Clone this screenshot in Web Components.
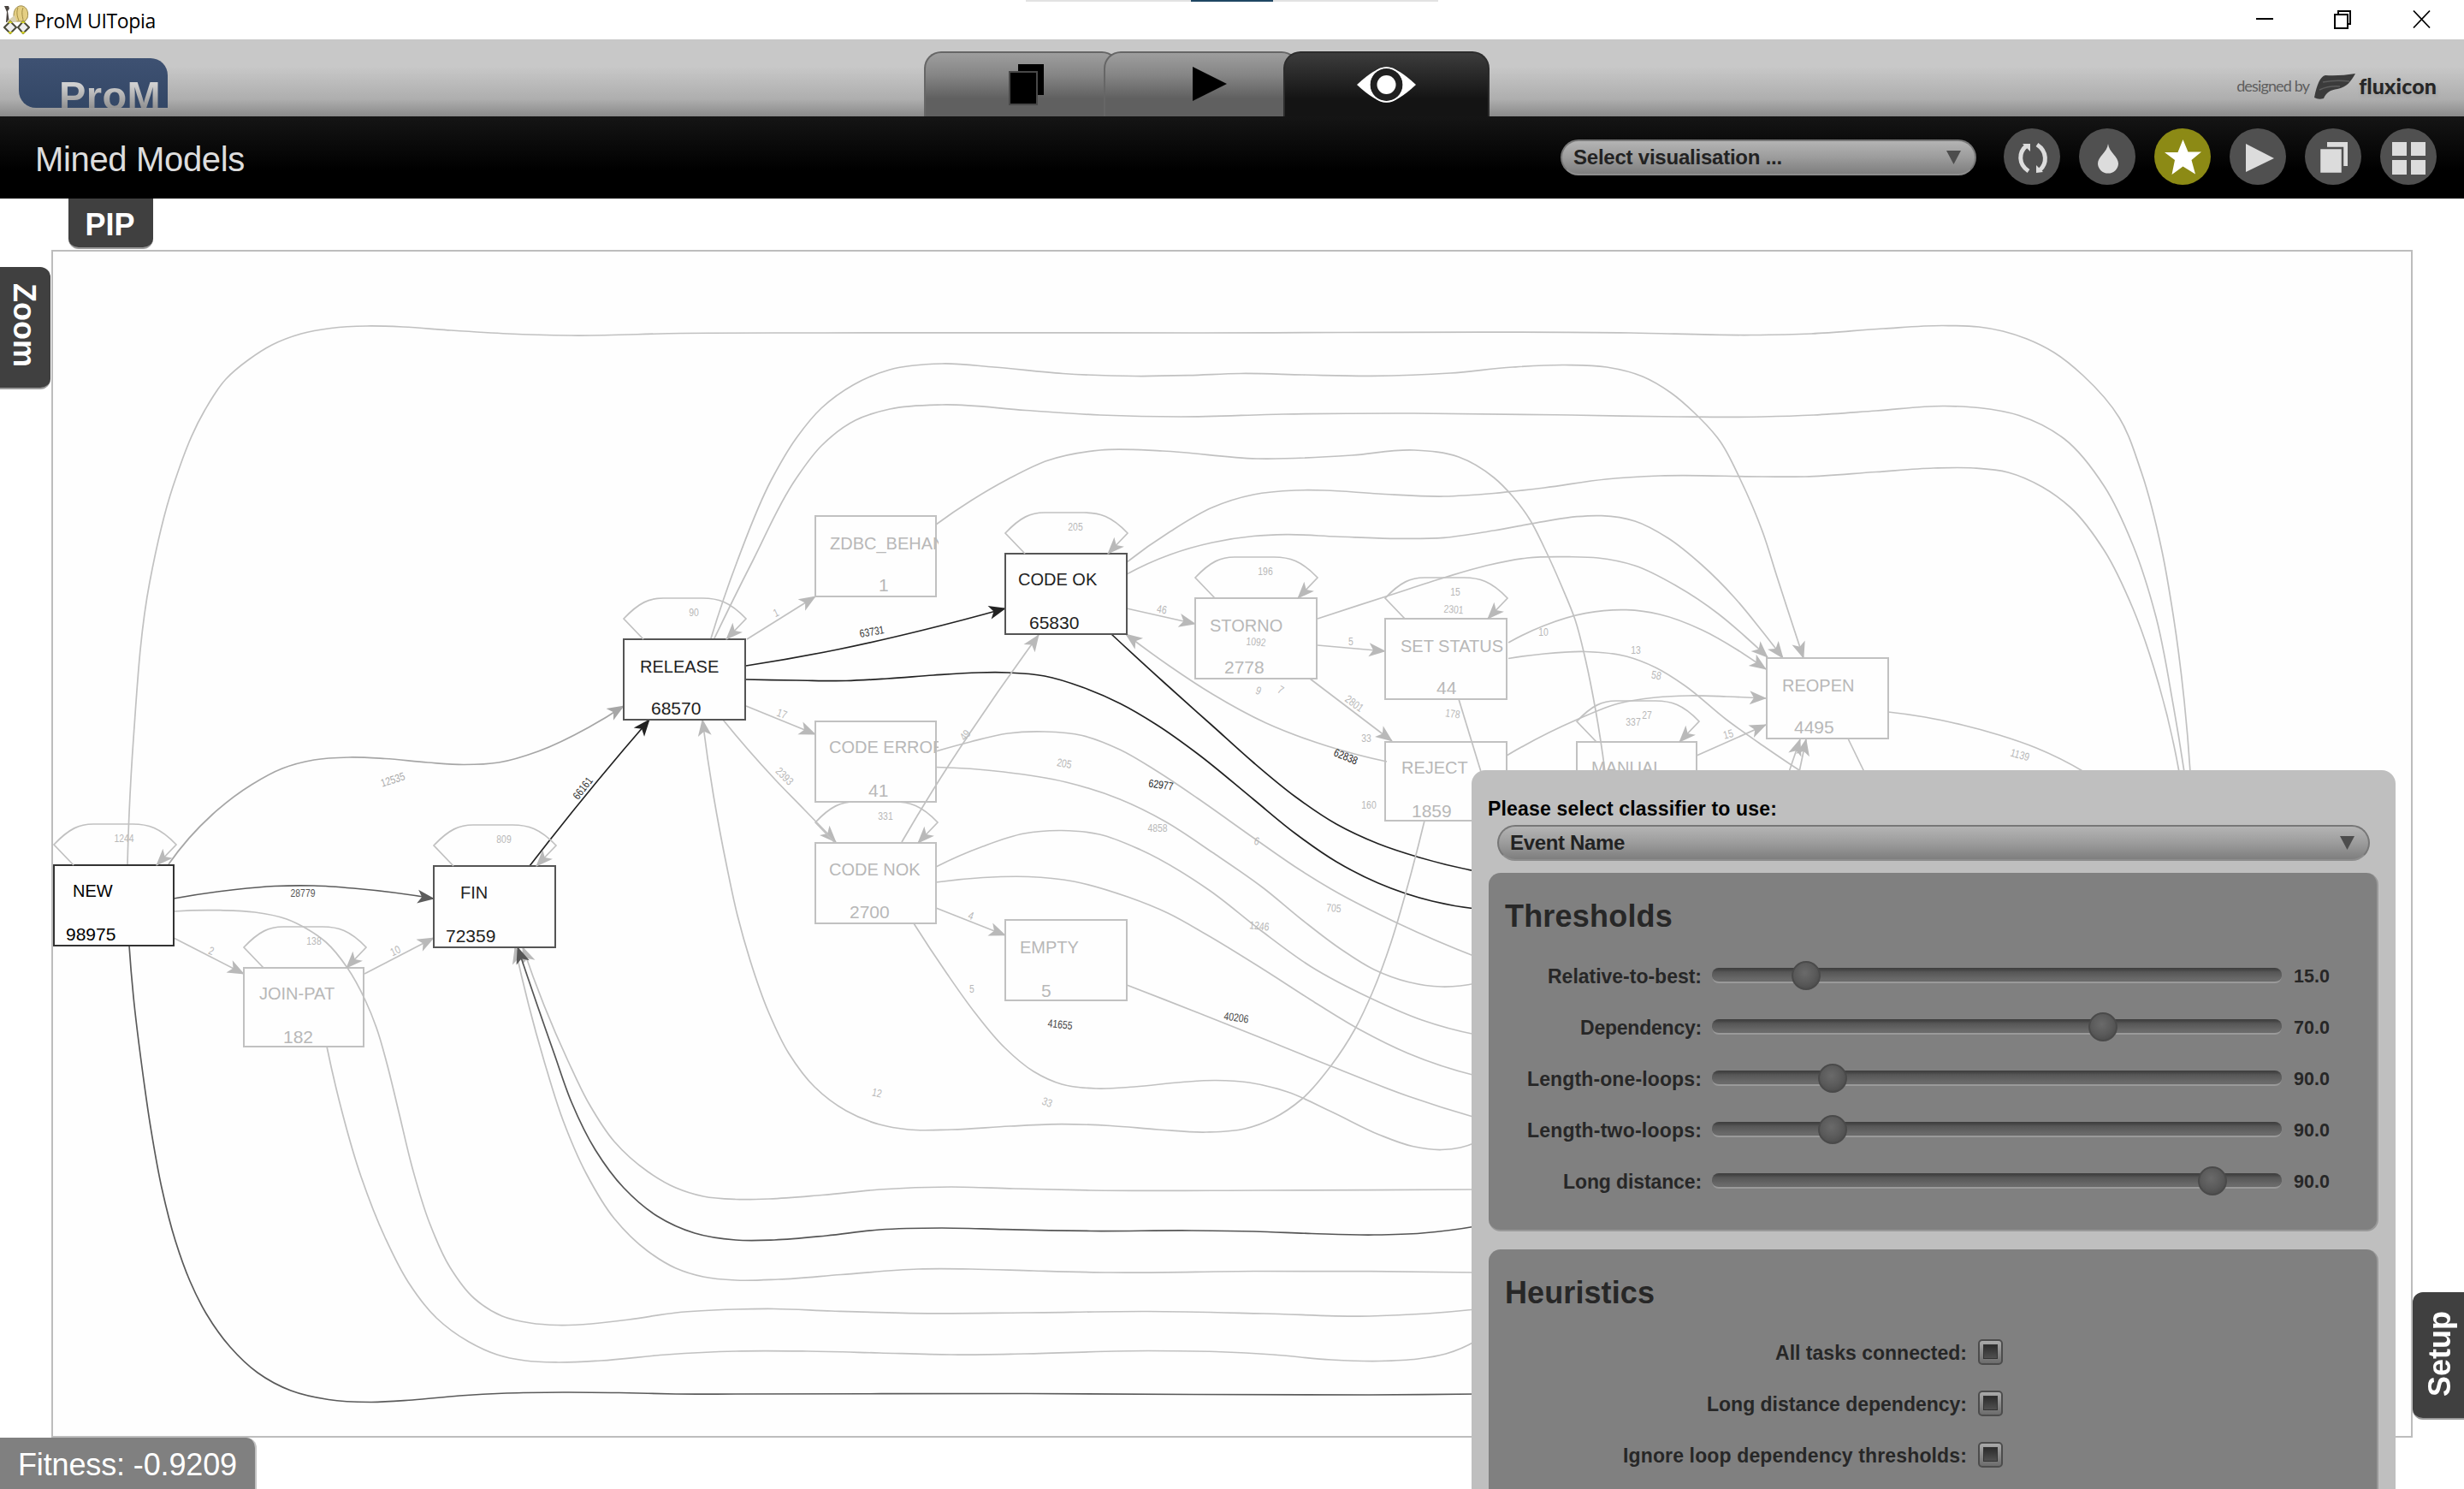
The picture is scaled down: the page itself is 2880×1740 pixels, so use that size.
<!DOCTYPE html>
<html lang="en">
<head>
<meta charset="utf-8">
<title>ProM UITopia</title>
<style>
html,body{margin:0;height:100%;overflow:hidden;background:#fff}
body{font-family:"Liberation Sans",Arial,sans-serif}
</style>
</head>
<body>
<prom-window></prom-window>
<script>
const define = (name, html, setup) => {
  const tpl = document.createElement('template');
  tpl.innerHTML = html;
  customElements.define(name, class extends HTMLElement {
    connectedCallback() {
      if (this.shadowRoot) return;
      this.attachShadow({mode: 'open'}).append(tpl.content.cloneNode(true));
      customElements.upgrade(this.shadowRoot);
      if (setup) setup(this, this.shadowRoot);
    }
  });
};

/* A single-line label whose tracking is adjusted to a given width. */
define('fit-label', `<style>:host{display:inline-block;white-space:nowrap}</style><slot></slot>`, host => {
  const w = +host.getAttribute('w');
  if (!w) return;
  const range = document.createRange();
  range.selectNodeContents(host);
  const natural = range.getBoundingClientRect().width;
  if (natural) host.style.letterSpacing = ((w - natural) / host.textContent.length) + 'px';
});

define('title-bar', `<style>
:host{display:flex;height:46px;background:#fff;align-items:center;position:relative;font-family:"Open Sans","Noto Sans",sans-serif;font-size:23px;line-height:46px;color:#000}
.app{margin:0 5px 0 4px}
fit-label{padding-top:2px;flex:1}
.grip{position:absolute;left:1199px;top:0;width:482px;height:2px;background:#e2e2e2;display:flex;justify-content:center}
.grip i{width:96px;background:#1f4763}
.ctl{margin-right:36px}
</style>
<svg class="app" width="31" height="34" viewBox="0 0 31 34"><path d="M1 1h5l1 3-2 3 2 13H3L4 8z" fill="#4a4440"/><path d="M12 12C12 3 18 0 22 1c5 1 8 7 6 14l-3 4H13z" fill="#e5cf83" stroke="#9b8a4c"/><path d="M17 3c-2 5-1 10 1 15M23 3c-2 5-1 9 0 14" stroke="#a18c45" fill="none"/><path d="M5 18l8-6 3 8H4z" fill="#d8d0b2"/><path d="M1 26l7-7 7 7-7 7zM17 26l6-7 7 7-7 7z" fill="#eee" stroke="#4a4a3a" stroke-width="2"/><path d="M5 31h6l-3 3zM20 31h6l-3 3zM5 21l3-3 3 3zM20 21l3-3 3 3z" fill="#d2cf22"/></svg>
<fit-label w="142">ProM UITopia</fit-label>
<div class="grip"><i></i></div>
<svg class="ctl" width="210" height="24" viewBox="0 0 210 24" fill="none" stroke="#000" stroke-width="2"><path d="M3 11h20"/><path d="M95 6h15v16H95zM99 6V2h14v15h-3"/><path d="M187 1.500l19 20M206 1.500l-19 20" stroke-width="1.800"/></svg>`);

define('workspace-tab', `<style>
:host{display:block;box-sizing:border-box;width:228px;height:76px;margin-right:-18px;border:2px solid #666;border-bottom:0;border-radius:20px 20px 0 0;background:linear-gradient(#9e9e9e,#858585 35%,#606060 72%)}
:host([active]){width:241px;margin:0;border-color:#2c2c2c;background:linear-gradient(#3c3c3c,#262626 40%,#141414 72%)}
</style><slot></slot>`);

define('app-header', `<style>
:host{display:grid;grid-template-columns:1080px 661px 1fr;height:90px;align-items:end;background:linear-gradient(#c8c8c8,#c8c8c8 35%,#aeaeae 78%,#8a8a8a)}
.logo{align-self:start;margin:22px 0 0 22px;box-sizing:border-box;width:174px;height:58px;padding-left:47px;overflow:hidden;border-radius:0 20px 0 20px;background:linear-gradient(#3e5172,#334766);font-weight:bold;font-size:47px;line-height:88px}
.logo fit-label{color:transparent;background:linear-gradient(#d0d0d0 35%,#8d8d8d 68%);-webkit-background-clip:text;background-clip:text}
.tabs{display:flex}
svg{display:block}
.by{display:flex;justify-content:flex-end;align-self:start;padding:34px 32px 0 0;font-family:Lato,sans-serif;line-height:40px}
.d{font-size:18px;font-weight:400;color:#5e5e5e}
.f{font-size:25px;font-weight:900;color:#262626;text-shadow:1px 3px 4px #8886}
.by svg{margin:5px 3px 0 6px}
</style>
<div class="logo"><fit-label w="119">ProM</fit-label></div>
<div class="tabs">
<workspace-tab><svg width="224" height="74"><path d="M108 13h30v36h-30z" fill="#000"/><path d="M98 22h32v38H98z" fill="#000" stroke="#484848" stroke-width="2"/></svg></workspace-tab>
<workspace-tab><svg width="224" height="74"><path d="M102 16l40 20-40 20z" fill="#000"/></svg></workspace-tab>
<workspace-tab active><svg width="237" height="74"><path d="M84 37Q106 16.500 118.500 16.500T153 37Q131 57.500 118.500 57.500T84 37z" fill="#fff"/><circle cx="118.500" cy="37" r="19" fill="#202020"/><circle cx="118.500" cy="37" r="11" fill="#fff"/><circle cx="118.500" cy="37" r="20" fill="none" stroke="#fff" stroke-width="1.500"/></svg></workspace-tab>
</div>
<div class="by"><fit-label class="d" w="85">designed by</fit-label><svg width="49" height="32" viewBox="0 0 49 32"><path d="M0 29C3 14 7 4 13 3Q30 4 48 1C43 10 38 17 27 19C19 20 14 23 11 30Q5 32 0 29z" fill="#3b3b3b"/><path d="M10 11Q25 8 41 10M6 20Q17 15 30 16" stroke="#5c5c5c" stroke-width="1.500" fill="none"/></svg><fit-label class="f" w="91">fluxicon</fit-label></div>`);

define('combo-box', `<style>
:host{display:flex;box-sizing:border-box;height:42px;border:2px solid #777;border-bottom-color:#8d8d8d;border-radius:21px;align-items:center;padding:0 16px 0 13px;justify-content:space-between;background:linear-gradient(#b4b4b4,#9c9c9c 50%,#7e7e7e);font-weight:bold;font-size:24px;line-height:38px;color:#222}
</style><slot></slot><svg width="17" height="17"><path d="M0 0h17L8.500 16z" fill="#4d4d4d"/></svg>`);

define('round-button', `<style>
:host{display:block;width:66px;height:66px;border-radius:50%;background:#505050;color:#dcdcdc}
:host([active]){background:#8c8a15;color:#fff}
</style><slot></slot>`);

define('view-bar', `<style>
:host{display:flex;height:96px;align-items:center;background:linear-gradient(#151515,#000 66%);box-sizing:border-box;padding:0 32px 0 41px;color:#ddd}
h1{margin:4px 0 0;flex:1;font-weight:normal;font-size:40px;line-height:96px}
combo-box{width:486px;margin-right:32px}
.buttons{display:flex;gap:22px;margin-top:-2px}
svg{display:block}
</style>
<h1><fit-label w="245">Mined Models</fit-label></h1>
<combo-box><fit-label w="244">Select visualisation ...</fit-label></combo-box>
<div class="buttons">
<round-button><svg width="66" height="66" fill="none" stroke="currentColor" stroke-width="5"><path d="M29 50C17 42 17 28 27 20"/><path d="M39 19C51 27 51 41 42 49"/><path d="M22 18h9v9z M38 52v-9l8 8z" fill="currentColor" stroke="none"/></svg></round-button>
<round-button><svg width="66" height="66"><path d="M34 18C35 28 46 33 46 41A12 11.500 0 0 1 22 41C22 33 33 28 34 18z" fill="currentColor"/></svg></round-button>
<round-button active><svg width="66" height="66"><path d="M33.500 13l6 14.500H55L43.500 37l4.500 16.500-14.500-9-13 9.500 3.500-17-12-9h15.500z" fill="currentColor"/></svg></round-button>
<round-button><svg width="66" height="66"><path d="M19 18l33 17-33 16z" fill="currentColor"/></svg></round-button>
<round-button><svg width="66" height="66"><path d="M26 16h24v28H26z" fill="currentColor"/><path d="M17 23h27v30H17z" fill="currentColor" stroke="#505050" stroke-width="2.500"/></svg></round-button>
<round-button><svg width="66" height="66"><path d="M14 16h17v16H14zM36 16h17v16H36zM14 37h17v17H14zM36 37h17v17H36z" fill="currentColor"/></svg></round-button>
</div>`);

/* Heuristics net: boxes, smoothed edges, arrowheads and frequencies. */
const LIGHT = '#c1c1c1', DARK = '#222';
const nodes = [
  [63,1011,203,1105,'NEW',85,1048,'98975',77,1099,'#333','#000','1244'],
  [507,1012,649,1107,'FIN',538,1050,'72359',521,1101,'#555','#222','809'],
  [285,1131,425,1223,'JOIN-PAT',303,1168,'182',331,1219,LIGHT,'#b8b8b8','138'],
  [729,747,871,841,'RELEASE',748,786,'68570',761,835,'#555','#222','90'],
  [953,603,1094,697,'ZDBC_BEHAN',970,642,'1',1027,691,LIGHT,'#b8b8b8'],
  [1175,647,1317,741,'CODE OK',1190,684,'65830',1203,735,'#555','#222','205'],
  [953,843,1094,937,'CODE ERROR',969,880,'41',1015,931,LIGHT,'#b8b8b8'],
  [953,985,1094,1079,'CODE NOK',969,1023,'2700',993,1073,LIGHT,'#b8b8b8','331'],
  [1175,1075,1317,1169,'EMPTY',1192,1114,'5',1217,1165,LIGHT,'#b8b8b8'],
  [1397,699,1539,793,'STORNO',1414,738,'2778',1431,787,LIGHT,'#b8b8b8','196'],
  [1619,723,1761,817,'SET STATUS',1637,762,'44',1679,811,LIGHT,'#b8b8b8','15'],
  [1619,867,1761,959,'REJECT',1638,904,'1859',1650,955,LIGHT,'#b8b8b8'],
  [1843,867,1983,959,'MANUAL',1860,904,'',0,0,LIGHT,'#b8b8b8','27'],
  [2065,769,2207,863,'REOPEN',2083,808,'4495',2097,857,LIGHT,'#b8b8b8']
];
/* [colour, flat list of x,y points, arrow at the end] */
const edges = [
  [LIGHT,[149,1010,151,950,156,863,175,680,202,569,239,480,264,443,291,420,318,403,352,390,387,383.500,429,381,471,382,527,386,594,390,667,392,796,389.500,960,389,1400,389,1906,389,2047,391.500,2117,390,2201,384,2271,380.500,2313,382,2341,387,2369,396,2401,412,2435,439,2477,488,2503,552,2527,644,2540,718,2553,819,2560,902]],
  [LIGHT,[831,746,862,655,902,560,930,513,960,477,997,450,1040,432,1101,425,1162,429,1242,436.500,1327,439.500,1389,438.700,1450,436.500,1523,438,1603,439.300,1695,436,1768,429,1829,426.500,1878,429,1920,440,1953,459,1980,482,2010,515,2034,560,2060,621,2077,674,2108,769],1],
  [LIGHT,[835,746,880,655,930,560,960,521,1000,491,1040,478,1101,473,1199,479.500,1286,485,1380,487,1500,484,1653,483,1836,485,1960,487,2060,487,2120,485,2193,480,2273,474.500,2313,476.500,2360,485.500,2413,513,2460,569,2493,637,2520,721,2540,823,2553,902]],
  [LIGHT,[1094,613,1135,585,1178,560,1225,538,1286,526,1359,527,1469,536,1580,532,1653,526,1705,534,1746,558,1768,580,1788,607,1805,640,1824,682,1841,724,1853,770,1865,830,1876,902]],
  [LIGHT,[1317,657,1368,621,1417,593,1465,578,1514,573,1548,573,1611,577,1688,580,1746,576.500,1805,570,1877,560,1940,556,2060,557,2110,557,2193,551.500,2260,547,2307,547,2347,552,2387,569,2420,593,2460,644,2493,711,2523,799,2547,902]],
  [LIGHT,[1317,671,1368,648,1417,634,1465,626.500,1504,624.700,1562,627,1630,629.300,1688,628.300,1746,620,1805,609.300,1843,603.700,1872,602.700,1911,609,1950,629,1989,660,2027,698,2060,738,2084,769],1],
  [LIGHT,[1540,723,1620,697,1688,675,1737,661,1785,652,1834,650.700,1868,652,1911,661,1960,685,2008,717,2040,744,2066,768],1],
  [LIGHT,[1763,751,1805,731,1853,716.700,1901,712.700,1940,718,1989,736,2030,759,2064,782],1],
  [LIGHT,[1763,769.500,1805,764,1853,761.500,1901,767,1935,780,1969,801,2018,841,2060,871,2106,902]],
  [LIGHT,[1761,883,1843,841,1892,822,1935,815,1974,813,2018,814,2064,816],1],
  [LIGHT,[1983,883,2064,847],1],
  [LIGHT,[1540,754,1619,761],1],
  [LIGHT,[1317,711,1397,729],1],
  [LIGHT,[1531,793,1627,866],1],
  [LIGHT,[1621,890,1552,872,1480,845,1417,811,1368,779,1316,741],1],
  [DARK,[1299,741,1360,797,1417,848,1465,891,1514,931,1562,963,1611,986,1659,1002,1725,1018]],
  [DARK,[872,794,931,795,989,795.500,1037,793,1091,789,1144,786,1178,786,1221,790,1265,803,1309,822,1352,847,1400,881,1465,934,1514,974,1562,1007,1611,1032,1674,1053,1725,1062]],
  ['#222',[872,778,979,759,1076,737,1175,711],1],
  [LIGHT,[873,747,953,697],1],
  [LIGHT,[872,825,953,858],1],
  [LIGHT,[845,841,906,911,940,946,977,984],1],
  [LIGHT,[1054,984,1090,924,1134,856,1214,742],1],
  [LIGHT,[1094,1061,1175,1093],1],
  [LIGHT,[1094,878,1134,867,1178,857,1221,855,1265,859.500,1309,876,1352,901,1400,933,1465,979,1514,1013,1556,1039,1634,1079,1725,1118]],
  [LIGHT,[1094,896.500,1173,902,1246,914,1309,934,1362,960,1417,996,1477,1038,1522,1075,1567,1109,1606,1133,1646,1147.500,1685,1153,1725,1149]],
  [LIGHT,[1094,1013,1149,989,1197,974,1241,970.500,1285,975,1333,993,1413,1040,1472,1086,1533,1130,1601,1166,1662,1192,1725,1209]],
  [LIGHT,[1094,1031,1149,1025.500,1202,1024.500,1255,1030,1318,1048,1365,1067,1410,1092,1477,1133,1533,1169,1589,1203,1646,1231,1725,1257]],
  [LIGHT,[1317,1151,1399,1183,1477,1214,1556,1246,1646,1281,1725,1306]],
  [LIGHT,[1068,1079,1107,1138,1140,1184,1174,1224,1208,1252,1241,1267,1281,1272,1326,1270,1382,1264.500,1421,1262.500,1460,1265,1505,1276,1556,1299,1612,1326,1651,1339.500,1685,1343.500,1707,1341,1725,1335]],
  [LIGHT,[1665,959,1644,1040,1626,1101,1604,1160,1584,1202,1556,1245,1522,1284,1488,1307,1455,1319,1410,1323,1354,1320,1298,1315.500,1241,1313.600,1180,1316,1112,1320,1062,1320,1028,1314,989,1298,952,1270,922,1231,898,1182,877,1123,862,1070,850,1015,834,930,821,841],1],
  [LIGHT,[1705,817,1731,902]],
  ['#a6a6a6',[197,1010,248,952,294,917,330,898,367,888,408,885,450,886.500,500,891,542,893.500,583,891,629,878,688,850,729,825],1],
  ['#222',[619,1012,640,985,759,841],1],
  ['#5c5c5c',[203,1050,275,1039.500,321,1035.500,367,1035,413,1038,507,1050],1],
  [LIGHT,[203,1096,285,1138],1],
  [LIGHT,[426,1138,507,1096],1],
  [LIGHT,[203,1065,257,1063.700,298,1066,335,1074,358,1085,381,1101,406,1131,427,1169,440,1201,452,1242,466,1299,482,1365,502,1429,526,1481,554,1517,587,1538,620,1546,652,1548.500,691,1547,735,1542,790,1534,860,1530,905,1529.500,972,1532,1084,1534.800,1197,1534,1342,1532.500,1477,1535,1601,1538,1668,1535,1725,1530]],
  [LIGHT,[382,1223,400,1300,422,1375,450,1446,477,1498,510,1540,548,1568,581,1583,614,1590,652,1592,702,1590,779,1583,860,1579,944,1579,1028,1581,1112,1583,1197,1582,1342,1578.500,1421,1579.500,1488,1583,1556,1589,1612,1590.500,1657,1588,1690,1582,1725,1567]],
  ['#5a5a5a',[151,1105,156,1165,165,1240,176,1317,189,1388,205,1450,222,1497,241,1535,269,1574,301,1604,340,1625,384,1635.500,433,1638.500,482,1636,537,1631,592,1628,658,1627,724,1627.500,790,1629,860,1629,1200,1628.500,1600,1630,1725,1629]],
  [LIGHT,[1725,1390,1477,1391,1275,1391,1185,1389,1112,1387,1028,1390,961,1396.500,899,1401,860,1401.500,822,1398,790,1388,757,1369,718,1334,688,1289,664,1240,611,1107],1],
  [LIGHT,[1725,1487,1466,1485.500,1298,1487,1208,1485,1135,1483,1073,1483,983,1489.500,910,1495,860,1496,822,1492,790,1482,757,1462,718,1424,685,1371,658,1309,636,1240,602,1107],1],
  ['#555',[1725,1433,1662,1441,1606,1443,1533,1441.500,1466,1439,1393,1438,1275,1438.500,1174,1436.700,1101,1435,1028,1437,966,1444,905,1449,860,1449,812,1441,768,1421,729,1388,696,1344,668,1288,648,1232,605,1107],1],
  [LIGHT,[2207,832,2250,838,2293,847,2337,859,2380,874,2436,902]],
  [LIGHT,[2160,863,2179,902]],
  [LIGHT,[2091,902,2104,864],1],
  [LIGHT,[2103,902,2111,864],1]
];
/* [text, centre x, centre y, angle, colour] */
const weights = [
  ['12535',459,911,-18,'#aaa'],['66161',681,921,-52,'#333'],['28779',354,1043,0,'#555'],['2',247,1111,20],['10',462,1111,-25],
  ['1',907,716,-25],['63731',1019,738,-10,'#333'],['17',914,834,20],['2393',917,907,45],['49',1128,859,-50],['205',1244,892,10],
  ['62977',1357,917,8,'#222'],['4858',1353,967,0],['4',1135,1070,20],['46',1358,712,10],['5',1579,749,0],['1092',1468,750,4],
  ['9',1471,807,20],['7',1497,806,30],['2801',1583,822,36],['33',1597,862,0],['178',1698,834,8],['62838',1573,884,22,'#222'],
  ['160',1600,940,0],['2301',1699,712,4],['10',1804,738,0],['13',1912,759,0],['58',1936,789,10],['337',1909,843,0],['15',2020,858,-15],
  ['6',1469,983,15],['705',1559,1061,4],['1246',1472,1082,6],['40206',1445,1189,8,'#444'],['41655',1239,1197,6,'#444'],['5',1136,1155,0],
  ['12',1025,1277,12],['33',1224,1288,20],['1139',2361,882,16]
];
/* Smooth curve through the points; tangents follow the local parabola so uneven spacing stays even. */
function spline(p) {
  const n = p.length / 2, P = i => [p[2*i], p[2*i+1]];
  const len = [], dir = [];
  for (let i = 0; i < n - 1; i++) {
    const a = P(i), b = P(i+1), l = Math.hypot(b[0]-a[0], b[1]-a[1]);
    len.push(l); dir.push([(b[0]-a[0])/l, (b[1]-a[1])/l]);
  }
  const tan = [];
  for (let i = 1; i < n - 1; i++) {
    const d1 = len[i-1], d2 = len[i];
    tan[i] = [0, 1].map(k => (dir[i-1][k]*d2 + dir[i][k]*d1) / (d1 + d2));
  }
  tan[0] = n > 2 ? [0, 1].map(k => 2*dir[0][k] - tan[1][k]) : dir[0];
  tan[n-1] = n > 2 ? [0, 1].map(k => 2*dir[n-2][k] - tan[n-2][k]) : dir[0];
  let d = `M${p[0]} ${p[1]}`;
  for (let i = 0; i < n - 1; i++) {
    const a = P(i), b = P(i+1), l = len[i] / 3, s = tan[i], e = tan[i+1];
    d += `C${[a[0]+s[0]*l, a[1]+s[1]*l, b[0]-e[0]*l, b[1]-e[1]*l].map(v => v.toFixed(1)).join(' ')} ${b[0]} ${b[1]}`;
  }
  return d;
}
function head(x0, y0, x, y, col) {
  const a = Math.atan2(y - y0, x - x0) * 180 / Math.PI;
  return `<path transform="translate(${x} ${y}) rotate(${a.toFixed(1)})" d="M1 0L-19-8-14 0-19 8z" fill="${col}"/>`;
}
define('process-graph', `<style>
:host{display:block;width:2880px;height:1508px}
svg{display:block}
text{font-family:"Liberation Sans",sans-serif;font-size:20px}
.n{font-size:21px}
.w{font-size:13px;text-anchor:middle}
</style><svg width="2880" height="1508" viewBox="0 232 2880 1508"></svg>`, (host, root) => {
  let s = `<rect x="61" y="293" width="2758" height="1386" fill="#fefefe" stroke="#bdbdbd" stroke-width="2"/>`;
  for (const [col, p, arrow] of edges) {
    const n = p.length;
    s += `<path d="${spline(p)}" fill="none" stroke="${col}" stroke-width="1.700"/>`;
    if (arrow) s += head(p[n-4], p[n-3], p[n-2], p[n-1], col === LIGHT ? '#b9b9b9' : col);
  }
  const weight = (txt, x, y, a, col) => `<text class="w" transform="translate(${x} ${y}) rotate(${a}) scale(.8 1)" y="4.500" fill="${col}">${txt}</text>`;
  nodes.forEach(([l,t,r,b,name,nx,ny,num,mx,my,line,ink,loop], i) => {
    s += `<rect x="${l}" y="${t}" width="${r-l}" height="${b-t}" fill="none" stroke="${line}" stroke-width="2"/>`
      + `<clipPath id="c${i}"><rect x="${l}" y="${t}" width="${r-l+3}" height="${b-t}"/></clipPath>`
      + `<text x="${nx}" y="${ny}" fill="${ink}" clip-path="url(#c${i})">${name}</text>`;
    if (num) s += `<text class="n" x="${mx}" y="${my}" fill="${ink}">${num}</text>`;
    if (loop) s += `<path d="M${l+23} ${t}L${l} ${t-24}C${l+18} ${t-43} ${l+30} ${t-48} ${l+46} ${t-48}H${l+92}C${l+110} ${t-48} ${l+124} ${t-44} ${l+143} ${t-24}L${l+120} ${t}" fill="none" stroke="${LIGHT}" stroke-width="1.700"/>`
      + head(l+143, t-24, l+120, t, '#b9b9b9')
      + weight(loop, l+82, t-32, 0, '#b8b8b8');
  });
  for (const [txt, x, y, a, col] of weights) s += weight(txt, x, y, a, col || '#b8b8b8');
  root.querySelector('svg').innerHTML = s;
});

define('edge-tab', `<style>
:host{display:flex;align-items:center;justify-content:center;box-sizing:border-box;position:absolute;background:#404040;color:#fff;font-weight:bold;font-size:36px;line-height:1}
:host([side=top]){left:80px;top:0;width:99px;height:59px;padding:5px 2px 0 0;border-radius:0 0 12px 12px;border-bottom:2px solid #999}
:host([side=left]){left:0;top:80px;width:59px;height:143px;border-radius:0 12px 12px 0;border-bottom:2px solid #999;writing-mode:vertical-rl;padding:0 4px 5px 0}
:host([side=right]){right:0;top:1278px;width:60px;height:149px;border-radius:12px 0 0 12px;border-bottom:2px solid #999}
:host([side=right]) slot{display:block;writing-mode:vertical-rl;transform:rotate(180deg);padding:3px 3px 0 0}
:host([side=bottom]){left:0;bottom:0;width:300px;height:60px;border-radius:0 12px 0 0;border-right:2px solid #c4c4c4;background:#808080;font-weight:normal;font-size:36px;padding-top:3px}
</style><slot></slot>`);

define('option-group', `<style>
:host{display:block;box-sizing:border-box;background:#808080;border-radius:14px;border-right:2px solid #999;border-bottom:2px solid #999;padding:21px 0 26px;color:#272727;font-weight:bold}
h2{margin:0 0 10px 19px;font-size:36px;line-height:60px}
</style><h2><slot name="title"></slot></h2><slot></slot>`);

define('slider-row', `<style>
:host{display:grid;grid-template-columns:249px 666px auto;column-gap:12px;align-items:center;height:60px;font-size:23px;line-height:60px;text-align:right}
.track{position:relative;box-sizing:border-box;height:18px;margin-top:-2px;border-radius:8px;background:linear-gradient(#3d3d3d,#484848 18%,#565656 30%,#6a6a6a 85%);border-bottom:2px solid #9a9a9a}
.knob{position:absolute;left:calc(var(--pos)*1px - 17px);top:-8px;width:34px;height:34px;box-sizing:border-box;border:2px solid #4a4a4a;border-radius:50%;background:radial-gradient(circle at 45% 40%,#6a6a6a,#5a5a5a 50%,#444)}
.v{text-align:left;font-size:21.500px;padding-left:2px}
</style><span class="l"></span><div class="track"><div class="knob"></div></div><span class="v"></span>`, (h, r) => {
  r.querySelector('.l').innerHTML = `<fit-label w="${h.getAttribute('w')}">${h.getAttribute('label')}</fit-label>`;
  r.querySelector('.v').textContent = h.getAttribute('value');
  h.style.setProperty('--pos', h.getAttribute('pos'));
});

define('check-row', `<style>
:host{display:grid;grid-template-columns:559px 29px;column-gap:13px;align-items:center;height:60px;font-size:23px;line-height:60px}
::slotted(*){justify-self:end}
i{box-sizing:border-box;display:block;width:29px;height:30px;margin-top:-2px;border:2px solid #4c4c4c;border-radius:5px;padding:4px;background:linear-gradient(#aaa,#6c6c6c)}
i::before{content:"";display:block;box-sizing:border-box;width:17px;height:17px;border:1px solid #333;background:linear-gradient(#2c2c2c,#505050)}
</style><slot></slot><i></i>`);

define('setup-panel', `<style>
:host{display:block;box-sizing:border-box;position:absolute;left:1720px;top:668px;width:1080px;height:840px;overflow:hidden;background:#bfbfbf;border-radius:16px 16px 0 0;padding:27px 20px 0 20px}
p{margin:0 0 0 -1px;font-weight:bold;font-size:23px;line-height:37px;color:#000}
combo-box{margin:0 10px 14px 10px}
option-group + option-group{margin-top:21px;height:400px}
</style>
<p><fit-label w="338">Please select classifier to use:</fit-label></p>
<combo-box><fit-label w="134">Event Name</fit-label></combo-box>
<option-group><fit-label slot="title" w="196">Thresholds</fit-label>
<slider-row label="Relative-to-best:" w="180" value="15.0" pos="110"></slider-row>
<slider-row label="Dependency:" w="142" value="70.0" pos="457"></slider-row>
<slider-row label="Length-one-loops:" w="204" value="90.0" pos="141"></slider-row>
<slider-row label="Length-two-loops:" w="204" value="90.0" pos="141"></slider-row>
<slider-row label="Long distance:" w="162" value="90.0" pos="585"></slider-row>
</option-group>
<option-group><fit-label slot="title" w="175">Heuristics</fit-label>
<check-row><fit-label w="224">All tasks connected:</fit-label></check-row>
<check-row><fit-label w="304">Long distance dependency:</fit-label></check-row>
<check-row><fit-label w="402">Ignore loop dependency thresholds:</fit-label></check-row>
</option-group>`);

define('prom-window', `<style>
:host{display:flex;flex-direction:column;width:2880px;height:1740px;overflow:hidden}
main{position:relative;flex:1;background:#fff}
</style>
<title-bar></title-bar><app-header></app-header><view-bar></view-bar>
<main><process-graph></process-graph>
<edge-tab side="top">PIP</edge-tab><edge-tab side="left">Zoom</edge-tab>
<setup-panel></setup-panel>
<edge-tab side="right">Setup</edge-tab><edge-tab side="bottom"><fit-label w="256">Fitness: -0.9209</fit-label></edge-tab></main>`);
</script>
</body>
</html>
